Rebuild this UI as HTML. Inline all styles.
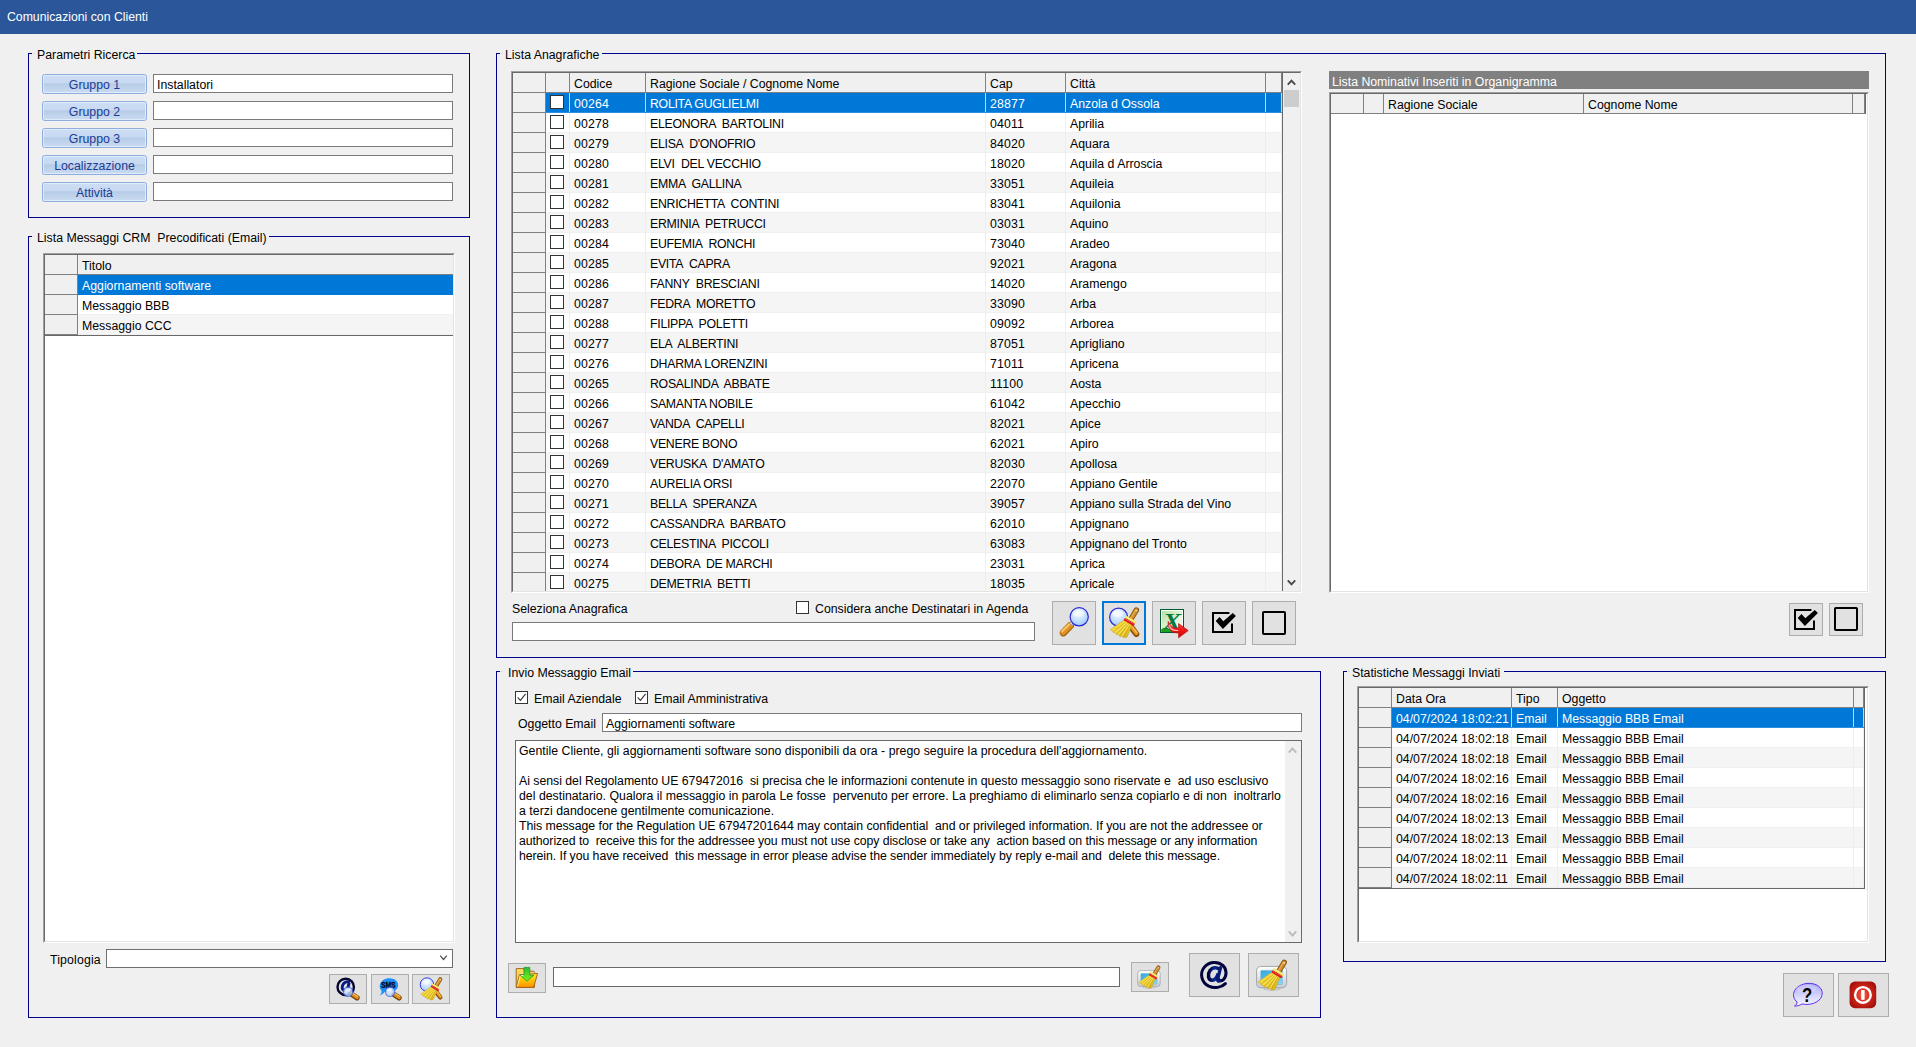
<!DOCTYPE html>
<html><head><meta charset="utf-8"><title>Comunicazioni con Clienti</title>
<style>
html,body{margin:0;padding:0;}
body{width:1916px;height:1047px;overflow:hidden;background:#f0f0f0;position:relative;font-family:"Liberation Sans",sans-serif;font-size:12.3px;color:#000;}
div{position:absolute;box-sizing:border-box;}
.t{white-space:pre;line-height:15px;height:15px;}
.title{background:#2b579a;}
.gb{border:1px solid #00008b;}
.gbgap{background:#f0f0f0;}
.tb{background:#fff;border:1px solid #7a7a7a;}
.lbtn{border:1px solid #8eaee0;border-radius:2.5px;background:linear-gradient(#ccddf4 0%,#c8daf2 42%,#b6cbe8 50%,#bcd0ea 62%,#cadbf2 100%);box-shadow:inset 0 0 0 1px rgba(228,238,250,.85);color:#1c3c94;text-align:center;line-height:19px;padding-top:1px;}
.ibtn{background:#e1e1e1;border:1px solid #adadad;}
.grid{background:#fff;border:1px solid #a0a0a0;}
.hc{background:#f0f0f0;border-right:1px solid #808080;border-bottom:1px solid #808080;}
.rh{background:#f0f0f0;border-right:1px solid #808080;border-bottom:1px solid #808080;}
.row{left:0;}
.sel{background:#0078d7;color:#fff;}
.alt{background:#f5f5f5;}
.vl{background:#ececec;width:1px;}
.cb{background:#fff;border:1px solid #333;}
.g3d{border-top:1px solid #a0a0a0;border-left:1px solid #a0a0a0;border-right:1px solid #fff;border-bottom:1px solid #fff;}
.g3d>div{border-top:1px solid #696969;border-left:1px solid #696969;border-right:1px solid #e3e3e3;border-bottom:1px solid #e3e3e3;overflow:hidden;}

</style></head>
<body>
<svg width="0" height="0" style="position:absolute;left:0;top:0"><defs>
<radialGradient id="gLens" cx="0.45" cy="0.32" r="0.75"><stop offset="0" stop-color="#f6fbff"/><stop offset="0.55" stop-color="#c4defd"/><stop offset="1" stop-color="#94c2fb"/></radialGradient>
<linearGradient id="gBris" x1="0" y1="0" x2="1" y2="1"><stop offset="0" stop-color="#fbe85a"/><stop offset="0.5" stop-color="#f2d230"/><stop offset="1" stop-color="#d4aa12"/></linearGradient>
<linearGradient id="gFold" x1="0" y1="0" x2="0" y2="1"><stop offset="0" stop-color="#ffe628"/><stop offset="0.45" stop-color="#ffc80a"/><stop offset="1" stop-color="#ff9000"/></linearGradient>
<linearGradient id="gFoldB" x1="0" y1="0" x2="0" y2="1"><stop offset="0" stop-color="#ffe060"/><stop offset="1" stop-color="#f0b020"/></linearGradient>
<linearGradient id="gArr" x1="0" y1="0" x2="0" y2="1"><stop offset="0" stop-color="#2fb83a"/><stop offset="0.6" stop-color="#5fe020"/><stop offset="1" stop-color="#7cf018"/></linearGradient>
<linearGradient id="gXl" x1="0" y1="0" x2="1" y2="1"><stop offset="0" stop-color="#b8e0a4"/><stop offset="0.6" stop-color="#e4f6da"/><stop offset="1" stop-color="#f4fcf0"/></linearGradient>
<linearGradient id="gRedA" x1="0" y1="0" x2="0" y2="1"><stop offset="0" stop-color="#ff5a5a"/><stop offset="0.5" stop-color="#f01818"/><stop offset="1" stop-color="#c80808"/></linearGradient>
<radialGradient id="gExit" cx="0.5" cy="0.5" r="0.62"><stop offset="0" stop-color="#f4604c"/><stop offset="0.45" stop-color="#d42a1c"/><stop offset="1" stop-color="#9e0c08"/></radialGradient>
<linearGradient id="gHelp" x1="0" y1="0" x2="0" y2="1"><stop offset="0" stop-color="#a6a4fa"/><stop offset="0.55" stop-color="#d6d6fd"/><stop offset="1" stop-color="#f6f6ff"/></linearGradient>
<linearGradient id="gScr" x1="0" y1="0" x2="1" y2="1"><stop offset="0" stop-color="#30a8e0"/><stop offset="1" stop-color="#90d8f4"/></linearGradient>
<linearGradient id="gMon" x1="0" y1="0" x2="0" y2="1"><stop offset="0" stop-color="#ffffff"/><stop offset="1" stop-color="#c8ccd0"/></linearGradient>
<linearGradient id="gAt" x1="0" y1="0" x2="1" y2="0"><stop offset="0" stop-color="#000038"/><stop offset="0.55" stop-color="#0a2a98"/><stop offset="1" stop-color="#00104a"/></linearGradient>

<symbol id="iBroom" viewBox="0 0 32 32" overflow="visible">
 <!-- broom handle -->
 <path d="M28.4 3 L22.9 12.2" stroke="#8a5410" stroke-width="5.4" stroke-linecap="round" fill="none"/>
 <path d="M28.3 3.2 L22.9 12.2" stroke="#cc8c28" stroke-width="3.7" stroke-linecap="round" fill="none"/>
 <path d="M27.4 3.4 L23.0 11" stroke="#e6b050" stroke-width="1.2" stroke-linecap="round" fill="none"/>
 <circle cx="28.3" cy="3.5" r="0.85" fill="#f8ecd0"/>
 <!-- bristles -->
 <path d="M16.9 12.6 C12 15.5 7 19.5 2.2 22.8 L4.6 24 L5.2 25.4 L7.6 26 L8.4 27.6 L11 27.8 L11.8 29.4 L14.6 29.3 L15.6 30.8 L18.9 30.3 C20.8 25.6 22.8 21 24.9 16.4 Z" fill="url(#gBris)" stroke="#c09a10" stroke-width="0.5"/>
 <path d="M17.5 15.5 L5.5 24.6 M19 16.5 L8.5 27 M20.6 17.2 L12 28.6 M22.2 17.8 L15.8 30" stroke="#b48c0c" stroke-width="0.7" fill="none" opacity="0.75"/>
 <path d="M18.2 15.8 L7 25.6 M19.8 16.8 L10.3 27.6 M21.4 17.4 L13.9 29.2" stroke="#fff48c" stroke-width="0.7" fill="none" opacity="0.85"/>
 <!-- yellow ferrule -->
 <path d="M18.3 10.3 L26.9 15.4" stroke="#f6e452" stroke-width="2.8" stroke-linecap="round" fill="none"/>
 <path d="M18.5 9.9 L27 14.9" stroke="#fdf6a4" stroke-width="0.8" stroke-linecap="round" fill="none"/>
 <!-- red band -->
 <path d="M17.2 12.6 L25.2 17.3" stroke="#dc1420" stroke-width="2.8" stroke-linecap="round" fill="none"/>
 <path d="M17.5 12.1 L25.4 16.7" stroke="#f86a6a" stroke-width="0.7" stroke-linecap="round" fill="none"/>
</symbol>

<symbol id="iMagBroom" viewBox="0 0 32 32" overflow="visible">
 <path d="M23.4 20.4 L28.3 27" stroke="#8a4c0a" stroke-width="6" stroke-linecap="round" fill="none"/>
 <path d="M23.8 20.2 L28.4 26.4" stroke="#e8961e" stroke-width="3.6" stroke-linecap="round" fill="none"/>
 <path d="M24.6 20 L28.8 25.6" stroke="#fcc860" stroke-width="1.1" stroke-linecap="round" fill="none"/>
 <circle cx="10.6" cy="10.1" r="9" fill="url(#gLens)" stroke="#2a28d2" stroke-width="1.2"/>
 <ellipse cx="9.6" cy="6.6" rx="5.6" ry="3.4" fill="#ffffff" opacity="0.55"/>
 <use href="#iBroom"/>
</symbol>

<symbol id="iMag" viewBox="0 0 32 32" overflow="visible">
 <path d="M12.4 18.6 L5.4 25.8" stroke="#9a5a10" stroke-width="7.2" stroke-linecap="round" fill="none"/>
 <path d="M12.2 18.2 L5.2 25.3" stroke="#e0901c" stroke-width="5.8" stroke-linecap="round" fill="none"/>
 <path d="M11 17.6 L4.2 24.4" stroke="#f8c060" stroke-width="2.2" stroke-linecap="round" fill="none"/>
 <path d="M15.8 14.8 L13 17.8" stroke="#a4aec4" stroke-width="3.6" fill="none"/>
 <path d="M14.6 15 L12.9 16.8" stroke="#dfe6f2" stroke-width="1.1" fill="none"/>
 <circle cx="21.2" cy="9.8" r="9.1" fill="url(#gLens)" stroke="#2a28d2" stroke-width="1.2"/>
 <ellipse cx="20.4" cy="6.2" rx="5.8" ry="3.5" fill="#ffffff" opacity="0.5"/>
</symbol>

<symbol id="iSmallMag" viewBox="0 0 24 24" overflow="visible">
 <!-- small magnifier lower-right: lens center (12.1,14.8) r 4.5, handle to (22.4,21.3) -->
 <path d="M16.4 17.8 L21 20.8" stroke="#7a4408" stroke-width="5.4" stroke-linecap="round" fill="none"/>
 <path d="M16.6 17.4 L21.1 20.3" stroke="#e09020" stroke-width="3.5" stroke-linecap="round" fill="none"/>
 <path d="M17.2 16.6 L21.6 19.4" stroke="#fcc860" stroke-width="1" stroke-linecap="round" fill="none"/>
 <circle cx="12.1" cy="14.8" r="4.7" fill="url(#gLens)" stroke="#4a6ae8" stroke-width="1.1" opacity="0.8"/>
 <ellipse cx="11.6" cy="13.2" rx="2.8" ry="1.7" fill="#fff" opacity="0.6"/>
</symbol>

<symbol id="iAtMag" viewBox="0 0 24 24" overflow="visible">
 <circle cx="9.7" cy="9.9" r="8.2" fill="none" stroke="#04042e" stroke-width="2.4"/>
 <path d="M14.2 5.2 C11.6 3.6 6.6 5.2 6.2 10.2 C6 13.6 9.4 14.6 11.4 11.6 L13.2 5.6 L11.6 13 C11.4 15 14.2 15.2 16 13.4" fill="none" stroke="#081c84" stroke-width="2.8"/>
 <use href="#iSmallMag"/>
</symbol>

<symbol id="iSmsMag" viewBox="0 0 24 24" overflow="visible">
 <path d="M3.4 13.8 C0.2 10 1.2 2.8 10 1.2 C19 0.4 22.2 7.6 18.8 12 C16.6 14.8 10.6 15.8 6.8 14.8 C5.6 16.6 3.8 18 1.6 18.4 C3.2 17 3.8 15.6 3.4 13.8 Z" fill="#1e92fa"/>
 <text x="3" y="11" font-family="Liberation Sans, sans-serif" font-weight="bold" font-size="8.3" textLength="14.6" lengthAdjust="spacingAndGlyphs" fill="#02040c" stroke="#02040c" stroke-width="0.3">SMS</text>
 <use href="#iSmallMag"/>
</symbol>

<symbol id="iFolder" viewBox="0 0 24 24" overflow="visible">
 <!-- back -->
 <path d="M1.2 2.6 L8.6 2.6 L9.6 5.2 L18.8 5.2 L19.4 6.4 L19.4 21.4 L1.2 21.4 Z" fill="url(#gFoldB)" stroke="#9c5c1c" stroke-width="0.9" stroke-linejoin="round"/>
 <!-- paper -->
 <path d="M5.6 7.6 L20 7 L19 12 L5 12 Z" fill="#fffef4"/>
 <!-- front flap -->
 <path d="M4.6 8.6 L22.6 7.5 L18.6 21.4 L1.3 21.4 Z" fill="url(#gFold)" stroke="#9c5c1c" stroke-width="0.9" stroke-linejoin="round"/>
 <path d="M5.3 9.4 L2.4 20.6" stroke="#fff6a0" stroke-width="0.9" fill="none"/>
 <!-- arrow -->
 <path d="M9 1.4 L14.8 1.4 L14.8 9.2 L18.8 9.2 L12 15.2 L5 9.2 L9 9.2 Z" fill="url(#gArr)" stroke="#1f9a2c" stroke-width="0.8" stroke-linejoin="round"/>
 <path d="M5.8 9.6 L8.6 9.6" stroke="#f0fff0" stroke-width="0.9"/>
</symbol>

<symbol id="iMonitor" viewBox="0 0 32 32" overflow="visible">
 <path d="M9 28.4 L21 28.4 C22.4 28.4 23 29.4 23 30.4 C18 31.8 12 31.8 7 30.4 C7 29.4 7.6 28.4 9 28.4 Z" fill="#d4d8dc" stroke="#a8acb0" stroke-width="0.5"/>
 <rect x="-0.4" y="7.4" width="30" height="21.4" rx="4.2" ry="4.2" fill="url(#gMon)" stroke="#9a9ea4" stroke-width="0.9"/>
 <rect x="3.8" y="11.4" width="21.6" height="14.2" rx="0.8" fill="url(#gScr)" stroke="#6aa8cc" stroke-width="0.5"/>
</symbol>

<symbol id="iMonBroom" viewBox="0 0 32 32" overflow="visible">
 <use href="#iMonitor"/>
 <g transform="translate(-1.2,0.3)"><use href="#iBroom"/></g>
</symbol>

<symbol id="iExcel" viewBox="0 0 32 32" overflow="visible">
 <rect x="2.5" y="2.5" width="23" height="23" fill="#f8fff6" stroke="#005a32" stroke-width="1"/>
 <rect x="4" y="4" width="20" height="20" fill="url(#gXl)"/>
 <rect x="3.2" y="22" width="21.6" height="3" fill="#1ea01e"/>
 <text transform="translate(14.2,21.8) scale(1.16,1)" font-family="Liberation Serif, serif" font-weight="bold" font-style="italic" font-size="23.5" text-anchor="middle" fill="#0c7a3c">X</text>
 <!-- red arrow -->
 <path d="M10.2 14.4 C9.6 21.2 12.6 26.2 20.6 26 L20.6 30.8 L30.2 23.6 L20.6 16.6 L20.6 21 C15.6 21.6 12.4 19.4 10.2 14.4 Z" fill="url(#gRedA)" stroke="#c00c0c" stroke-width="0.7" stroke-linejoin="round"/>
 <path d="M11 18 C12.2 22.4 15.6 24 20.2 23.4" stroke="#ffd0d0" stroke-width="1.1" fill="none" opacity="0.9"/>
</symbol>

<symbol id="iAt" viewBox="0 0 28 28" overflow="visible">
 <path d="M25.4 22.6 C21.4 26.6 14.6 27.8 8.8 25.2 C1.6 21.6 -0.6 12.6 4 6.6 C8.6 0.6 17.6 -0.2 22.8 4.4 C27.2 8.4 26.8 15.4 23.4 18.6 C21.6 20.2 19.2 20.2 18.6 18.2" fill="none" stroke="#02023c" stroke-width="3" stroke-linecap="round"/>
 <path d="M19.4 8.6 C17.6 6 12.6 5.8 10 9.6 C7.4 13.4 8.2 18.6 11.6 19.2 C14.6 19.6 17 16.6 18.2 12.6" fill="none" stroke="url(#gAt)" stroke-width="3.5"/>
 <path d="M20.6 6.6 L17.6 18.4 C17.4 19.8 18.4 20.4 19.6 20" fill="none" stroke="#061a78" stroke-width="3.3" stroke-linecap="round"/>
</symbol>
<symbol id="iChk" viewBox="0 0 24 24" overflow="visible">
 <path d="M17.4 2 L1 2 L1 21 L20 21 L20 12.6" fill="none" stroke="#000" stroke-width="2" stroke-linejoin="miter"/>
 <path d="M3.7 10 L7.5 6.1 L11.3 10.2 L20.8 2.1 L23.9 5 L10.9 18 Z" fill="#000"/>
</symbol>
<symbol id="iBox" viewBox="0 0 24 24" overflow="visible">
 <rect x="1" y="1" width="22" height="22" rx="0.8" fill="none" stroke="#000" stroke-width="2"/>
</symbol>

<symbol id="iHelp" viewBox="0 0 32 28" overflow="visible">
 <path d="M5.2 20.6 C-1.4 15 0.6 4.6 14 1.6 C28 -0.4 34.6 9.4 29.4 17 C25.6 22.4 16.4 24.2 10.4 22.6 C8 24.2 5.6 24.8 2.6 24.8 C4.6 23.6 5.4 22.2 5.2 20.6 Z" fill="url(#gHelp)" stroke="#5a28ea" stroke-width="1"/>
 <ellipse cx="15" cy="7" rx="10.5" ry="4.4" fill="#fff" opacity="0.25"/>
 <text transform="translate(15.6,20.2) scale(0.84,1)" font-family="Liberation Sans, sans-serif" font-weight="bold" font-size="20.5" text-anchor="middle" fill="#000">?</text>
</symbol>

<symbol id="iExit" viewBox="0 0 28 28" overflow="visible">
 <rect x="0.6" y="0.6" width="26.6" height="26.6" rx="5.4" fill="url(#gExit)"/>
 <circle cx="13.9" cy="13.9" r="7.8" fill="none" stroke="#fff" stroke-width="2.4"/>
 <rect x="12.2" y="9" width="3.4" height="9.8" fill="#fff"/>
</symbol>
</defs></svg><div class="title" style="left:0px;top:0px;width:1916px;height:34px;"></div><div class="t " style="left:7px;top:10px;font-size:12.25px;color:#fff;">Comunicazioni con Clienti</div><div class="gb" style="left:28px;top:53px;width:442px;height:165px;"></div><div class="gbgap" style="left:32px;top:52px;width:105px;height:3px;"></div><div class="" style="left:33px;top:53px;width:2px;height:1px;background:#dcdcdc;"></div><div class="t gbl" style="left:37px;top:48px;">Parametri Ricerca</div><div class="lbtn" style="left:42px;top:74px;width:105px;height:20px;"><span>Gruppo 1</span></div><div class="tb" style="left:153px;top:74px;width:300px;height:19px;"></div><div class="lbtn" style="left:42px;top:101px;width:105px;height:20px;"><span>Gruppo 2</span></div><div class="tb" style="left:153px;top:101px;width:300px;height:19px;"></div><div class="lbtn" style="left:42px;top:128px;width:105px;height:20px;"><span>Gruppo 3</span></div><div class="tb" style="left:153px;top:128px;width:300px;height:19px;"></div><div class="lbtn" style="left:42px;top:155px;width:105px;height:20px;"><span>Localizzazione</span></div><div class="tb" style="left:153px;top:155px;width:300px;height:19px;"></div><div class="lbtn" style="left:42px;top:182px;width:105px;height:20px;"><span>Attività</span></div><div class="tb" style="left:153px;top:182px;width:300px;height:19px;"></div><div class="t " style="left:157px;top:78px;">Installatori</div><div class="gb" style="left:28px;top:236px;width:442px;height:782px;"></div><div class="gbgap" style="left:32px;top:235px;width:237px;height:3px;"></div><div class="" style="left:33px;top:236px;width:2px;height:1px;background:#dcdcdc;"></div><div class="t gbl" style="left:37px;top:231px;">Lista Messaggi CRM  Precodificati (Email)</div><div class="grid g3d" style="left:43px;top:253px;width:412px;height:690px;overflow:hidden;"><div style="left:0;top:0;width:410px;height:688px;"><div class="hc" style="left:0px;top:0px;width:33px;height:20px;"></div><div class="hc" style="left:33px;top:0px;width:375px;height:20px;border-right:none;"></div><div class="t " style="left:37px;top:4px;">Titolo</div><div class="rh" style="left:0px;top:20px;width:33px;height:20px;"></div><div class="sel" style="left:33px;top:20px;width:375px;height:20px;"></div><div class="t " style="left:37px;top:24px;color:#fff;">Aggiornamenti software</div><div class="rh" style="left:0px;top:40px;width:33px;height:20px;"></div><div class="" style="left:33px;top:40px;width:375px;height:20px;"></div><div class="t " style="left:37px;top:44px;">Messaggio BBB</div><div class="" style="left:33px;top:59px;width:375px;height:1px;background:#f0f0f0;"></div><div class="rh" style="left:0px;top:60px;width:33px;height:20px;"></div><div class="alt" style="left:33px;top:60px;width:375px;height:20px;"></div><div class="t " style="left:37px;top:64px;">Messaggio CCC</div><div class="" style="left:33px;top:79px;width:375px;height:1px;background:#f0f0f0;"></div><div class="" style="left:0px;top:80px;width:408px;height:1px;background:#696969;"></div></div></div><div class="t " style="left:50px;top:953px;letter-spacing:0.15px;">Tipologia</div><div class="tb" style="left:106px;top:949px;width:347px;height:19px;border-color:#6e6e6e;"></div><svg style="position:absolute;left:439px;top:953px" width="10" height="8" viewBox="0 0 10 8"><path d="M1.2 2.7 L4.5 6.5 L7.8 2.7" fill="none" stroke="#4a4a4a" stroke-width="1.15"/></svg><div class="ibtn" style="left:329px;top:974px;width:38px;height:30px;"></div><div class="ibtn" style="left:371px;top:974px;width:38px;height:30px;"></div><div class="ibtn" style="left:412px;top:974px;width:38px;height:30px;"></div><div class="gb" style="left:496px;top:53px;width:1390px;height:605px;"></div><div class="gbgap" style="left:500px;top:52px;width:102px;height:3px;"></div><div class="" style="left:501px;top:53px;width:2px;height:1px;background:#dcdcdc;"></div><div class="t gbl" style="left:505px;top:48px;">Lista Anagrafiche</div><div class="grid g3d" style="left:511px;top:71px;width:791px;height:522px;overflow:hidden;"><div style="left:0;top:0;width:789px;height:520px;"><div class="hc" style="left:0px;top:0px;width:33px;height:20px;"></div><div class="hc" style="left:33px;top:0px;width:24px;height:20px;"></div><div class="hc" style="left:57px;top:0px;width:76px;height:20px;"></div><div class="t " style="left:61px;top:4px;">Codice</div><div class="hc" style="left:133px;top:0px;width:340px;height:20px;"></div><div class="t " style="left:137px;top:4px;">Ragione Sociale / Cognome Nome</div><div class="hc" style="left:473px;top:0px;width:80px;height:20px;"></div><div class="t " style="left:477px;top:4px;">Cap</div><div class="hc" style="left:553px;top:0px;width:200px;height:20px;"></div><div class="t " style="left:557px;top:4px;">Città</div><div class="hc" style="left:753px;top:0px;width:16px;height:20px;"></div><div class="rh" style="left:0px;top:20px;width:33px;height:20px;"></div><div class="sel" style="left:33px;top:20px;width:736px;height:20px;"></div><div class="cb" style="left:37px;top:22px;width:14px;height:14px;"></div><div class="t " style="left:61px;top:24px;color:#fff;letter-spacing:0.15px;">00264</div><div class="t " style="left:137px;top:24px;color:#fff;letter-spacing:-0.27px;">ROLITA GUGLIELMI</div><div class="t " style="left:477px;top:24px;color:#fff;letter-spacing:0.15px;">28877</div><div class="t " style="left:557px;top:24px;color:#fff;">Anzola d Ossola</div><div class="" style="left:33px;top:39px;width:736px;height:1px;background:#2d8fe0;"></div><div class="rh" style="left:0px;top:40px;width:33px;height:20px;"></div><div class="" style="left:33px;top:40px;width:736px;height:20px;"></div><div class="cb" style="left:37px;top:42px;width:14px;height:14px;"></div><div class="t " style="left:61px;top:44px;letter-spacing:0.15px;">00278</div><div class="t " style="left:137px;top:44px;letter-spacing:-0.27px;">ELEONORA  BARTOLINI</div><div class="t " style="left:477px;top:44px;letter-spacing:0.15px;">04011</div><div class="t " style="left:557px;top:44px;">Aprilia</div><div class="" style="left:33px;top:59px;width:736px;height:1px;background:#f0f0f0;"></div><div class="rh" style="left:0px;top:60px;width:33px;height:20px;"></div><div class="alt" style="left:33px;top:60px;width:736px;height:20px;"></div><div class="cb" style="left:37px;top:62px;width:14px;height:14px;"></div><div class="t " style="left:61px;top:64px;letter-spacing:0.15px;">00279</div><div class="t " style="left:137px;top:64px;letter-spacing:-0.27px;">ELISA  D&#x27;ONOFRIO</div><div class="t " style="left:477px;top:64px;letter-spacing:0.15px;">84020</div><div class="t " style="left:557px;top:64px;">Aquara</div><div class="" style="left:33px;top:79px;width:736px;height:1px;background:#f0f0f0;"></div><div class="rh" style="left:0px;top:80px;width:33px;height:20px;"></div><div class="" style="left:33px;top:80px;width:736px;height:20px;"></div><div class="cb" style="left:37px;top:82px;width:14px;height:14px;"></div><div class="t " style="left:61px;top:84px;letter-spacing:0.15px;">00280</div><div class="t " style="left:137px;top:84px;letter-spacing:-0.27px;">ELVI  DEL VECCHIO</div><div class="t " style="left:477px;top:84px;letter-spacing:0.15px;">18020</div><div class="t " style="left:557px;top:84px;">Aquila d Arroscia</div><div class="" style="left:33px;top:99px;width:736px;height:1px;background:#f0f0f0;"></div><div class="rh" style="left:0px;top:100px;width:33px;height:20px;"></div><div class="alt" style="left:33px;top:100px;width:736px;height:20px;"></div><div class="cb" style="left:37px;top:102px;width:14px;height:14px;"></div><div class="t " style="left:61px;top:104px;letter-spacing:0.15px;">00281</div><div class="t " style="left:137px;top:104px;letter-spacing:-0.27px;">EMMA  GALLINA</div><div class="t " style="left:477px;top:104px;letter-spacing:0.15px;">33051</div><div class="t " style="left:557px;top:104px;">Aquileia</div><div class="" style="left:33px;top:119px;width:736px;height:1px;background:#f0f0f0;"></div><div class="rh" style="left:0px;top:120px;width:33px;height:20px;"></div><div class="" style="left:33px;top:120px;width:736px;height:20px;"></div><div class="cb" style="left:37px;top:122px;width:14px;height:14px;"></div><div class="t " style="left:61px;top:124px;letter-spacing:0.15px;">00282</div><div class="t " style="left:137px;top:124px;letter-spacing:-0.27px;">ENRICHETTA  CONTINI</div><div class="t " style="left:477px;top:124px;letter-spacing:0.15px;">83041</div><div class="t " style="left:557px;top:124px;">Aquilonia</div><div class="" style="left:33px;top:139px;width:736px;height:1px;background:#f0f0f0;"></div><div class="rh" style="left:0px;top:140px;width:33px;height:20px;"></div><div class="alt" style="left:33px;top:140px;width:736px;height:20px;"></div><div class="cb" style="left:37px;top:142px;width:14px;height:14px;"></div><div class="t " style="left:61px;top:144px;letter-spacing:0.15px;">00283</div><div class="t " style="left:137px;top:144px;letter-spacing:-0.27px;">ERMINIA  PETRUCCI</div><div class="t " style="left:477px;top:144px;letter-spacing:0.15px;">03031</div><div class="t " style="left:557px;top:144px;">Aquino</div><div class="" style="left:33px;top:159px;width:736px;height:1px;background:#f0f0f0;"></div><div class="rh" style="left:0px;top:160px;width:33px;height:20px;"></div><div class="" style="left:33px;top:160px;width:736px;height:20px;"></div><div class="cb" style="left:37px;top:162px;width:14px;height:14px;"></div><div class="t " style="left:61px;top:164px;letter-spacing:0.15px;">00284</div><div class="t " style="left:137px;top:164px;letter-spacing:-0.27px;">EUFEMIA  RONCHI</div><div class="t " style="left:477px;top:164px;letter-spacing:0.15px;">73040</div><div class="t " style="left:557px;top:164px;">Aradeo</div><div class="" style="left:33px;top:179px;width:736px;height:1px;background:#f0f0f0;"></div><div class="rh" style="left:0px;top:180px;width:33px;height:20px;"></div><div class="alt" style="left:33px;top:180px;width:736px;height:20px;"></div><div class="cb" style="left:37px;top:182px;width:14px;height:14px;"></div><div class="t " style="left:61px;top:184px;letter-spacing:0.15px;">00285</div><div class="t " style="left:137px;top:184px;letter-spacing:-0.27px;">EVITA  CAPRA</div><div class="t " style="left:477px;top:184px;letter-spacing:0.15px;">92021</div><div class="t " style="left:557px;top:184px;">Aragona</div><div class="" style="left:33px;top:199px;width:736px;height:1px;background:#f0f0f0;"></div><div class="rh" style="left:0px;top:200px;width:33px;height:20px;"></div><div class="" style="left:33px;top:200px;width:736px;height:20px;"></div><div class="cb" style="left:37px;top:202px;width:14px;height:14px;"></div><div class="t " style="left:61px;top:204px;letter-spacing:0.15px;">00286</div><div class="t " style="left:137px;top:204px;letter-spacing:-0.27px;">FANNY  BRESCIANI</div><div class="t " style="left:477px;top:204px;letter-spacing:0.15px;">14020</div><div class="t " style="left:557px;top:204px;">Aramengo</div><div class="" style="left:33px;top:219px;width:736px;height:1px;background:#f0f0f0;"></div><div class="rh" style="left:0px;top:220px;width:33px;height:20px;"></div><div class="alt" style="left:33px;top:220px;width:736px;height:20px;"></div><div class="cb" style="left:37px;top:222px;width:14px;height:14px;"></div><div class="t " style="left:61px;top:224px;letter-spacing:0.15px;">00287</div><div class="t " style="left:137px;top:224px;letter-spacing:-0.27px;">FEDRA  MORETTO</div><div class="t " style="left:477px;top:224px;letter-spacing:0.15px;">33090</div><div class="t " style="left:557px;top:224px;">Arba</div><div class="" style="left:33px;top:239px;width:736px;height:1px;background:#f0f0f0;"></div><div class="rh" style="left:0px;top:240px;width:33px;height:20px;"></div><div class="" style="left:33px;top:240px;width:736px;height:20px;"></div><div class="cb" style="left:37px;top:242px;width:14px;height:14px;"></div><div class="t " style="left:61px;top:244px;letter-spacing:0.15px;">00288</div><div class="t " style="left:137px;top:244px;letter-spacing:-0.27px;">FILIPPA  POLETTI</div><div class="t " style="left:477px;top:244px;letter-spacing:0.15px;">09092</div><div class="t " style="left:557px;top:244px;">Arborea</div><div class="" style="left:33px;top:259px;width:736px;height:1px;background:#f0f0f0;"></div><div class="rh" style="left:0px;top:260px;width:33px;height:20px;"></div><div class="alt" style="left:33px;top:260px;width:736px;height:20px;"></div><div class="cb" style="left:37px;top:262px;width:14px;height:14px;"></div><div class="t " style="left:61px;top:264px;letter-spacing:0.15px;">00277</div><div class="t " style="left:137px;top:264px;letter-spacing:-0.27px;">ELA  ALBERTINI</div><div class="t " style="left:477px;top:264px;letter-spacing:0.15px;">87051</div><div class="t " style="left:557px;top:264px;">Aprigliano</div><div class="" style="left:33px;top:279px;width:736px;height:1px;background:#f0f0f0;"></div><div class="rh" style="left:0px;top:280px;width:33px;height:20px;"></div><div class="" style="left:33px;top:280px;width:736px;height:20px;"></div><div class="cb" style="left:37px;top:282px;width:14px;height:14px;"></div><div class="t " style="left:61px;top:284px;letter-spacing:0.15px;">00276</div><div class="t " style="left:137px;top:284px;letter-spacing:-0.27px;">DHARMA LORENZINI</div><div class="t " style="left:477px;top:284px;letter-spacing:0.15px;">71011</div><div class="t " style="left:557px;top:284px;">Apricena</div><div class="" style="left:33px;top:299px;width:736px;height:1px;background:#f0f0f0;"></div><div class="rh" style="left:0px;top:300px;width:33px;height:20px;"></div><div class="alt" style="left:33px;top:300px;width:736px;height:20px;"></div><div class="cb" style="left:37px;top:302px;width:14px;height:14px;"></div><div class="t " style="left:61px;top:304px;letter-spacing:0.15px;">00265</div><div class="t " style="left:137px;top:304px;letter-spacing:-0.27px;">ROSALINDA  ABBATE</div><div class="t " style="left:477px;top:304px;letter-spacing:0.15px;">11100</div><div class="t " style="left:557px;top:304px;">Aosta</div><div class="" style="left:33px;top:319px;width:736px;height:1px;background:#f0f0f0;"></div><div class="rh" style="left:0px;top:320px;width:33px;height:20px;"></div><div class="" style="left:33px;top:320px;width:736px;height:20px;"></div><div class="cb" style="left:37px;top:322px;width:14px;height:14px;"></div><div class="t " style="left:61px;top:324px;letter-spacing:0.15px;">00266</div><div class="t " style="left:137px;top:324px;letter-spacing:-0.27px;">SAMANTA NOBILE</div><div class="t " style="left:477px;top:324px;letter-spacing:0.15px;">61042</div><div class="t " style="left:557px;top:324px;">Apecchio</div><div class="" style="left:33px;top:339px;width:736px;height:1px;background:#f0f0f0;"></div><div class="rh" style="left:0px;top:340px;width:33px;height:20px;"></div><div class="alt" style="left:33px;top:340px;width:736px;height:20px;"></div><div class="cb" style="left:37px;top:342px;width:14px;height:14px;"></div><div class="t " style="left:61px;top:344px;letter-spacing:0.15px;">00267</div><div class="t " style="left:137px;top:344px;letter-spacing:-0.27px;">VANDA  CAPELLI</div><div class="t " style="left:477px;top:344px;letter-spacing:0.15px;">82021</div><div class="t " style="left:557px;top:344px;">Apice</div><div class="" style="left:33px;top:359px;width:736px;height:1px;background:#f0f0f0;"></div><div class="rh" style="left:0px;top:360px;width:33px;height:20px;"></div><div class="" style="left:33px;top:360px;width:736px;height:20px;"></div><div class="cb" style="left:37px;top:362px;width:14px;height:14px;"></div><div class="t " style="left:61px;top:364px;letter-spacing:0.15px;">00268</div><div class="t " style="left:137px;top:364px;letter-spacing:-0.27px;">VENERE BONO</div><div class="t " style="left:477px;top:364px;letter-spacing:0.15px;">62021</div><div class="t " style="left:557px;top:364px;">Apiro</div><div class="" style="left:33px;top:379px;width:736px;height:1px;background:#f0f0f0;"></div><div class="rh" style="left:0px;top:380px;width:33px;height:20px;"></div><div class="alt" style="left:33px;top:380px;width:736px;height:20px;"></div><div class="cb" style="left:37px;top:382px;width:14px;height:14px;"></div><div class="t " style="left:61px;top:384px;letter-spacing:0.15px;">00269</div><div class="t " style="left:137px;top:384px;letter-spacing:-0.27px;">VERUSKA  D&#x27;AMATO</div><div class="t " style="left:477px;top:384px;letter-spacing:0.15px;">82030</div><div class="t " style="left:557px;top:384px;">Apollosa</div><div class="" style="left:33px;top:399px;width:736px;height:1px;background:#f0f0f0;"></div><div class="rh" style="left:0px;top:400px;width:33px;height:20px;"></div><div class="" style="left:33px;top:400px;width:736px;height:20px;"></div><div class="cb" style="left:37px;top:402px;width:14px;height:14px;"></div><div class="t " style="left:61px;top:404px;letter-spacing:0.15px;">00270</div><div class="t " style="left:137px;top:404px;letter-spacing:-0.27px;">AURELIA ORSI</div><div class="t " style="left:477px;top:404px;letter-spacing:0.15px;">22070</div><div class="t " style="left:557px;top:404px;">Appiano Gentile</div><div class="" style="left:33px;top:419px;width:736px;height:1px;background:#f0f0f0;"></div><div class="rh" style="left:0px;top:420px;width:33px;height:20px;"></div><div class="alt" style="left:33px;top:420px;width:736px;height:20px;"></div><div class="cb" style="left:37px;top:422px;width:14px;height:14px;"></div><div class="t " style="left:61px;top:424px;letter-spacing:0.15px;">00271</div><div class="t " style="left:137px;top:424px;letter-spacing:-0.27px;">BELLA  SPERANZA</div><div class="t " style="left:477px;top:424px;letter-spacing:0.15px;">39057</div><div class="t " style="left:557px;top:424px;">Appiano sulla Strada del Vino</div><div class="" style="left:33px;top:439px;width:736px;height:1px;background:#f0f0f0;"></div><div class="rh" style="left:0px;top:440px;width:33px;height:20px;"></div><div class="" style="left:33px;top:440px;width:736px;height:20px;"></div><div class="cb" style="left:37px;top:442px;width:14px;height:14px;"></div><div class="t " style="left:61px;top:444px;letter-spacing:0.15px;">00272</div><div class="t " style="left:137px;top:444px;letter-spacing:-0.27px;">CASSANDRA  BARBATO</div><div class="t " style="left:477px;top:444px;letter-spacing:0.15px;">62010</div><div class="t " style="left:557px;top:444px;">Appignano</div><div class="" style="left:33px;top:459px;width:736px;height:1px;background:#f0f0f0;"></div><div class="rh" style="left:0px;top:460px;width:33px;height:20px;"></div><div class="alt" style="left:33px;top:460px;width:736px;height:20px;"></div><div class="cb" style="left:37px;top:462px;width:14px;height:14px;"></div><div class="t " style="left:61px;top:464px;letter-spacing:0.15px;">00273</div><div class="t " style="left:137px;top:464px;letter-spacing:-0.27px;">CELESTINA  PICCOLI</div><div class="t " style="left:477px;top:464px;letter-spacing:0.15px;">63083</div><div class="t " style="left:557px;top:464px;">Appignano del Tronto</div><div class="" style="left:33px;top:479px;width:736px;height:1px;background:#f0f0f0;"></div><div class="rh" style="left:0px;top:480px;width:33px;height:20px;"></div><div class="" style="left:33px;top:480px;width:736px;height:20px;"></div><div class="cb" style="left:37px;top:482px;width:14px;height:14px;"></div><div class="t " style="left:61px;top:484px;letter-spacing:0.15px;">00274</div><div class="t " style="left:137px;top:484px;letter-spacing:-0.27px;">DEBORA  DE MARCHI</div><div class="t " style="left:477px;top:484px;letter-spacing:0.15px;">23031</div><div class="t " style="left:557px;top:484px;">Aprica</div><div class="" style="left:33px;top:499px;width:736px;height:1px;background:#f0f0f0;"></div><div class="rh" style="left:0px;top:500px;width:33px;height:20px;"></div><div class="alt" style="left:33px;top:500px;width:736px;height:20px;"></div><div class="cb" style="left:37px;top:502px;width:14px;height:14px;"></div><div class="t " style="left:61px;top:504px;letter-spacing:0.15px;">00275</div><div class="t " style="left:137px;top:504px;letter-spacing:-0.27px;">DEMETRIA  BETTI</div><div class="t " style="left:477px;top:504px;letter-spacing:0.15px;">18035</div><div class="t " style="left:557px;top:504px;">Apricale</div><div class="" style="left:33px;top:519px;width:736px;height:1px;background:#f0f0f0;"></div><div class="" style="left:56px;top:40px;width:1px;height:500px;background:rgba(236,236,236,.9);"></div><div class="" style="left:56px;top:20px;width:1px;height:19px;background:#b9d9f4;"></div><div class="" style="left:132px;top:40px;width:1px;height:500px;background:rgba(236,236,236,.9);"></div><div class="" style="left:132px;top:20px;width:1px;height:19px;background:#b9d9f4;"></div><div class="" style="left:472px;top:40px;width:1px;height:500px;background:rgba(236,236,236,.9);"></div><div class="" style="left:472px;top:20px;width:1px;height:19px;background:#b9d9f4;"></div><div class="" style="left:552px;top:40px;width:1px;height:500px;background:rgba(236,236,236,.9);"></div><div class="" style="left:552px;top:20px;width:1px;height:19px;background:#b9d9f4;"></div><div class="" style="left:752px;top:40px;width:1px;height:500px;background:rgba(236,236,236,.9);"></div><div class="" style="left:752px;top:20px;width:1px;height:19px;background:#b9d9f4;"></div><div class="" style="left:768px;top:40px;width:1px;height:500px;background:rgba(236,236,236,.9);"></div><div class="" style="left:768px;top:20px;width:1px;height:19px;background:#b9d9f4;"></div><div class="" style="left:769px;top:0px;width:1px;height:520px;background:#696969;"></div><div class="" style="left:770px;top:0px;width:17px;height:520px;background:#f0f0f0;"></div><div class="" style="left:771px;top:17px;width:15px;height:17px;background:#cdcdcd;"></div><svg style="position:absolute;left:774px;top:5px" width="9" height="8" viewBox="0 0 9 8"><path d="M0.8 6.6 L4.5 2.6 L8.2 6.6" fill="none" stroke="#4a4a4a" stroke-width="2"/></svg><svg style="position:absolute;left:774px;top:506px" width="9" height="8" viewBox="0 0 9 8"><path d="M0.8 1.4 L4.5 5.4 L8.2 1.4" fill="none" stroke="#4a4a4a" stroke-width="2"/></svg></div></div><div class="t " style="left:512px;top:602px;">Seleziona Anagrafica</div><div class="cb" style="left:796px;top:601px;width:13px;height:13px;"></div><div class="t " style="left:815px;top:602px;">Considera anche Destinatari in Agenda</div><div class="tb" style="left:512px;top:622px;width:523px;height:19px;"></div><div class="ibtn" style="left:1052px;top:601px;width:44px;height:44px;"></div><div class="ibtn" style="left:1102px;top:601px;width:44px;height:44px;border:2px solid #0078d7;"></div><div class="ibtn" style="left:1152px;top:601px;width:44px;height:44px;"></div><div class="ibtn" style="left:1202px;top:601px;width:44px;height:44px;"></div><div class="ibtn" style="left:1252px;top:601px;width:44px;height:44px;"></div><div class="" style="left:1329px;top:71px;width:540px;height:18px;background:#808080;"></div><div class="t " style="left:1332px;top:75px;color:#fff;">Lista Nominativi Inseriti in Organigramma</div><div class="grid g3d" style="left:1329px;top:92px;width:540px;height:501px;overflow:hidden;"><div style="left:0;top:0;width:538px;height:499px;"><div class="hc" style="left:0px;top:0px;width:33px;height:20px;"></div><div class="hc" style="left:33px;top:0px;width:20px;height:20px;"></div><div class="hc" style="left:53px;top:0px;width:200px;height:20px;"></div><div class="t " style="left:57px;top:4px;">Ragione Sociale</div><div class="hc" style="left:253px;top:0px;width:269px;height:20px;"></div><div class="t " style="left:257px;top:4px;">Cognome Nome</div><div class="hc" style="left:522px;top:0px;width:12px;height:20px;"></div><div class="" style="left:534px;top:0px;width:1px;height:20px;background:#696969;"></div></div></div><div class="ibtn" style="left:1789px;top:603px;width:34px;height:33px;"></div><div class="ibtn" style="left:1829px;top:603px;width:34px;height:33px;"></div><div class="gb" style="left:496px;top:671px;width:825px;height:347px;"></div><div class="gbgap" style="left:500px;top:670px;width:133px;height:3px;"></div><div class="" style="left:501px;top:671px;width:2px;height:1px;background:#dcdcdc;"></div><div class="t gbl" style="left:508px;top:666px;">Invio Messaggio Email</div><div class="cb" style="left:515px;top:691px;width:13px;height:13px;"><svg style="position:absolute;left:0;top:0" width="11" height="11" viewBox="0 0 11 11"><path d="M1.6 5.4 L4.4 8.3 L9.6 1.9" fill="none" stroke="#3a3a3a" stroke-width="1.15"/></svg></div><div class="t " style="left:534px;top:692px;">Email Aziendale</div><div class="cb" style="left:635px;top:691px;width:13px;height:13px;"><svg style="position:absolute;left:0;top:0" width="11" height="11" viewBox="0 0 11 11"><path d="M1.6 5.4 L4.4 8.3 L9.6 1.9" fill="none" stroke="#3a3a3a" stroke-width="1.15"/></svg></div><div class="t " style="left:654px;top:692px;">Email Amministrativa</div><div class="t " style="left:518px;top:717px;">Oggetto Email</div><div class="tb" style="left:602px;top:713px;width:700px;height:19px;"></div><div class="t " style="left:606px;top:717px;">Aggiornamenti software</div><div class="tb" style="left:515px;top:740px;width:787px;height:203px;border-color:#696969;"></div><div class="" style="left:1285px;top:741px;width:16px;height:201px;background:#f0f0f0;"></div><svg style="position:absolute;left:1288px;top:746px" width="9" height="8" viewBox="0 0 9 8"><path d="M0.8 6.6 L4.5 2.4 L8.2 6.6" fill="none" stroke="#bcbcbc" stroke-width="2"/></svg><svg style="position:absolute;left:1288px;top:930px" width="9" height="8" viewBox="0 0 9 8"><path d="M0.8 1.4 L4.5 5.6 L8.2 1.4" fill="none" stroke="#bcbcbc" stroke-width="2"/></svg><div class="t " style="left:519px;top:744px;letter-spacing:0.027px;">Gentile Cliente, gli aggiornamenti software sono disponibili da ora - prego seguire la procedura dell&#x27;aggiornamento.</div><div class="t " style="left:519px;top:774px;letter-spacing:-0.020px;">Ai sensi del Regolamento UE 679472016  si precisa che le informazioni contenute in questo messaggio sono riservate e  ad uso esclusivo</div><div class="t " style="left:519px;top:789px;letter-spacing:0.013px;">del destinatario. Qualora il messaggio in parola Le fosse  pervenuto per errore. La preghiamo di eliminarlo senza copiarlo e di non  inoltrarlo</div><div class="t " style="left:519px;top:804px;letter-spacing:0.034px;">a terzi dandocene gentilmente comunicazione.</div><div class="t " style="left:519px;top:819px;letter-spacing:-0.032px;">This message for the Regulation UE 67947201644 may contain confidential  and or privileged information. If you are not the addressee or</div><div class="t " style="left:519px;top:834px;letter-spacing:-0.080px;">authorized to  receive this for the addressee you must not use copy disclose or take any  action based on this message or any information</div><div class="t " style="left:519px;top:849px;letter-spacing:-0.060px;">herein. If you have received  this message in error please advise the sender immediately by reply e-mail and  delete this message.</div><div class="ibtn" style="left:508px;top:963px;width:38px;height:30px;"></div><div class="tb" style="left:553px;top:967px;width:567px;height:20px;border-color:#696969;"></div><div class="ibtn" style="left:1131px;top:962px;width:38px;height:30px;"></div><div class="ibtn" style="left:1189px;top:953px;width:51px;height:44px;"></div><div class="ibtn" style="left:1248px;top:953px;width:51px;height:44px;"></div><div class="gb" style="left:1343px;top:671px;width:543px;height:291px;"></div><div class="gbgap" style="left:1347px;top:670px;width:157px;height:3px;"></div><div class="" style="left:1348px;top:671px;width:2px;height:1px;background:#dcdcdc;"></div><div class="t gbl" style="left:1352px;top:666px;">Statistiche Messaggi Inviati</div><div class="grid g3d" style="left:1357px;top:686px;width:512px;height:257px;overflow:hidden;"><div style="left:0;top:0;width:510px;height:255px;"><div class="hc" style="left:0px;top:0px;width:33px;height:20px;"></div><div class="hc" style="left:33px;top:0px;width:120px;height:20px;"></div><div class="t " style="left:37px;top:4px;">Data Ora</div><div class="hc" style="left:153px;top:0px;width:46px;height:20px;"></div><div class="t " style="left:157px;top:4px;">Tipo</div><div class="hc" style="left:199px;top:0px;width:296px;height:20px;"></div><div class="t " style="left:203px;top:4px;">Oggetto</div><div class="hc" style="left:495px;top:0px;width:10px;height:20px;"></div><div class="rh" style="left:0px;top:20px;width:33px;height:20px;"></div><div class="sel" style="left:33px;top:20px;width:472px;height:20px;"></div><div class="t " style="left:37px;top:24px;color:#fff;">04/07/2024 18:02:21</div><div class="t " style="left:157px;top:24px;color:#fff;">Email</div><div class="t " style="left:203px;top:24px;color:#fff;">Messaggio BBB Email</div><div class="" style="left:33px;top:39px;width:472px;height:1px;background:#2d8fe0;"></div><div class="rh" style="left:0px;top:40px;width:33px;height:20px;"></div><div class="" style="left:33px;top:40px;width:472px;height:20px;"></div><div class="t " style="left:37px;top:44px;">04/07/2024 18:02:18</div><div class="t " style="left:157px;top:44px;">Email</div><div class="t " style="left:203px;top:44px;">Messaggio BBB Email</div><div class="" style="left:33px;top:59px;width:472px;height:1px;background:#f0f0f0;"></div><div class="rh" style="left:0px;top:60px;width:33px;height:20px;"></div><div class="alt" style="left:33px;top:60px;width:472px;height:20px;"></div><div class="t " style="left:37px;top:64px;">04/07/2024 18:02:18</div><div class="t " style="left:157px;top:64px;">Email</div><div class="t " style="left:203px;top:64px;">Messaggio BBB Email</div><div class="" style="left:33px;top:79px;width:472px;height:1px;background:#f0f0f0;"></div><div class="rh" style="left:0px;top:80px;width:33px;height:20px;"></div><div class="" style="left:33px;top:80px;width:472px;height:20px;"></div><div class="t " style="left:37px;top:84px;">04/07/2024 18:02:16</div><div class="t " style="left:157px;top:84px;">Email</div><div class="t " style="left:203px;top:84px;">Messaggio BBB Email</div><div class="" style="left:33px;top:99px;width:472px;height:1px;background:#f0f0f0;"></div><div class="rh" style="left:0px;top:100px;width:33px;height:20px;"></div><div class="alt" style="left:33px;top:100px;width:472px;height:20px;"></div><div class="t " style="left:37px;top:104px;">04/07/2024 18:02:16</div><div class="t " style="left:157px;top:104px;">Email</div><div class="t " style="left:203px;top:104px;">Messaggio BBB Email</div><div class="" style="left:33px;top:119px;width:472px;height:1px;background:#f0f0f0;"></div><div class="rh" style="left:0px;top:120px;width:33px;height:20px;"></div><div class="" style="left:33px;top:120px;width:472px;height:20px;"></div><div class="t " style="left:37px;top:124px;">04/07/2024 18:02:13</div><div class="t " style="left:157px;top:124px;">Email</div><div class="t " style="left:203px;top:124px;">Messaggio BBB Email</div><div class="" style="left:33px;top:139px;width:472px;height:1px;background:#f0f0f0;"></div><div class="rh" style="left:0px;top:140px;width:33px;height:20px;"></div><div class="alt" style="left:33px;top:140px;width:472px;height:20px;"></div><div class="t " style="left:37px;top:144px;">04/07/2024 18:02:13</div><div class="t " style="left:157px;top:144px;">Email</div><div class="t " style="left:203px;top:144px;">Messaggio BBB Email</div><div class="" style="left:33px;top:159px;width:472px;height:1px;background:#f0f0f0;"></div><div class="rh" style="left:0px;top:160px;width:33px;height:20px;"></div><div class="" style="left:33px;top:160px;width:472px;height:20px;"></div><div class="t " style="left:37px;top:164px;">04/07/2024 18:02:11</div><div class="t " style="left:157px;top:164px;">Email</div><div class="t " style="left:203px;top:164px;">Messaggio BBB Email</div><div class="" style="left:33px;top:179px;width:472px;height:1px;background:#f0f0f0;"></div><div class="rh" style="left:0px;top:180px;width:33px;height:20px;"></div><div class="alt" style="left:33px;top:180px;width:472px;height:20px;"></div><div class="t " style="left:37px;top:184px;">04/07/2024 18:02:11</div><div class="t " style="left:157px;top:184px;">Email</div><div class="t " style="left:203px;top:184px;">Messaggio BBB Email</div><div class="" style="left:33px;top:199px;width:472px;height:1px;background:#f0f0f0;"></div><div class="" style="left:152px;top:40px;width:1px;height:160px;background:rgba(236,236,236,.9);"></div><div class="" style="left:152px;top:20px;width:1px;height:19px;background:#b9d9f4;"></div><div class="" style="left:198px;top:40px;width:1px;height:160px;background:rgba(236,236,236,.9);"></div><div class="" style="left:198px;top:20px;width:1px;height:19px;background:#b9d9f4;"></div><div class="" style="left:494px;top:40px;width:1px;height:160px;background:rgba(236,236,236,.9);"></div><div class="" style="left:494px;top:20px;width:1px;height:19px;background:#b9d9f4;"></div><div class="" style="left:504px;top:40px;width:1px;height:160px;background:rgba(236,236,236,.9);"></div><div class="" style="left:504px;top:20px;width:1px;height:19px;background:#b9d9f4;"></div><div class="" style="left:0px;top:200px;width:506px;height:1px;background:#696969;"></div><div class="" style="left:505px;top:0px;width:1px;height:201px;background:#696969;"></div></div></div><div class="ibtn" style="left:1783px;top:973px;width:51px;height:44px;"></div><div class="ibtn" style="left:1838px;top:973px;width:51px;height:44px;"></div><svg style="position:absolute;left:1058px;top:607px;overflow:visible" width="32" height="32"><use href="#iMag" width="32" height="32"/></svg><svg style="position:absolute;left:1108px;top:607px;overflow:visible" width="32" height="32"><use href="#iMagBroom" width="32" height="32"/></svg><svg style="position:absolute;left:1158px;top:607px;overflow:visible" width="32" height="32"><use href="#iExcel" width="32" height="32"/></svg><svg style="position:absolute;left:1212px;top:611px;overflow:visible" width="24" height="24"><use href="#iChk" width="24" height="24"/></svg><svg style="position:absolute;left:1262px;top:611px;overflow:visible" width="24" height="24"><use href="#iBox" width="24" height="24"/></svg><svg style="position:absolute;left:1794px;top:608px;overflow:visible" width="24" height="24"><use href="#iChk" width="24" height="24"/></svg><svg style="position:absolute;left:1834px;top:607px;overflow:visible" width="24" height="24"><use href="#iBox" width="24" height="24"/></svg><svg style="position:absolute;left:336px;top:977px;overflow:visible" width="24" height="24"><use href="#iAtMag" width="24" height="24"/></svg><svg style="position:absolute;left:378px;top:977px;overflow:visible" width="24" height="24"><use href="#iSmsMag" width="24" height="24"/></svg><svg style="position:absolute;left:419px;top:977px;overflow:visible" width="24" height="24"><use href="#iMagBroom" width="24" height="24"/></svg><svg style="position:absolute;left:515px;top:966px;overflow:visible" width="24" height="24"><use href="#iFolder" width="24" height="24"/></svg><svg style="position:absolute;left:1138px;top:965px;overflow:visible" width="24" height="24"><use href="#iMonBroom" width="24" height="24"/></svg><svg style="position:absolute;left:1257px;top:959px;overflow:visible" width="32" height="32"><use href="#iMonBroom" width="32" height="32"/></svg><svg style="position:absolute;left:1792px;top:982px;overflow:visible" width="31" height="27.2"><use href="#iHelp" width="31" height="27.2"/></svg><svg style="position:absolute;left:1849px;top:981px;overflow:visible" width="28" height="28"><use href="#iExit" width="28" height="28"/></svg><svg style="position:absolute;left:1200px;top:961px;overflow:visible" width="28" height="28"><use href="#iAt" width="28" height="28"/></svg>
</body></html>
